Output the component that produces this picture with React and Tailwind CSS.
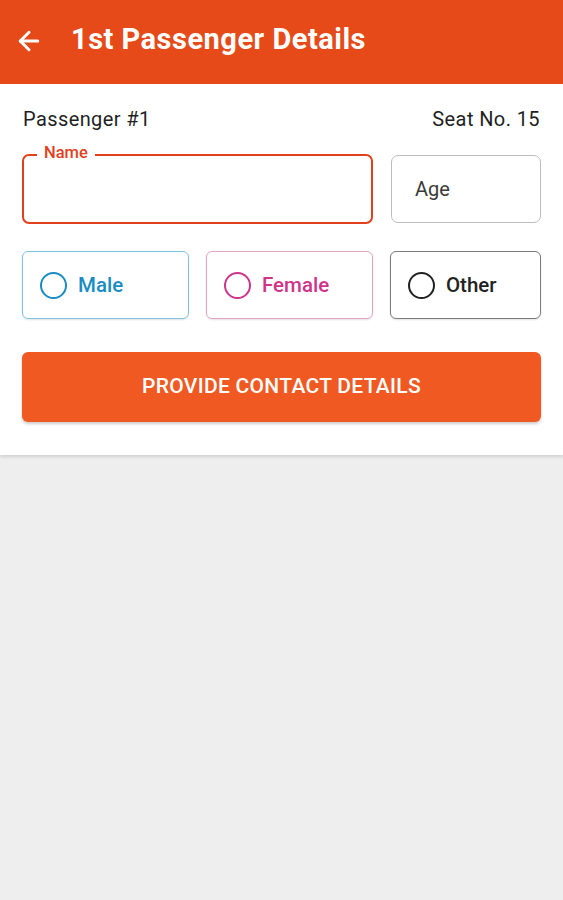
import React, { useState } from "react";
import { ArrowLeft } from "lucide-react";

const genders = [
    { key: "male", label: "Male", box: "border-[#7cc3dd]", text: "text-[#1a8cc4]", ring: "border-[#1a8cc4]" },
    { key: "female", label: "Female", box: "border-[#e3a3c3]", text: "text-[#d0338a]", ring: "border-[#d0338a]" },
    { key: "other", label: "Other", box: "border-[#7a7a7a]", text: "text-[#222222]", ring: "border-[#222222]" },
];

const App = () => {
    const [name, setName] = useState("");
    const [age, setAge] = useState("");
    const [gender, setGender] = useState("");

    return (
        <div className="min-h-screen bg-[#eeeeee] font-['Roboto','Liberation_Sans',sans-serif]">
            {/* toolbar */}
            <div className="h-[84px] bg-[#e64a19] flex items-center pl-[14px]">
                <ArrowLeft size={30} strokeWidth={2.4} className="text-white -mt-[2px]" />
                <h1 className="ml-[27px] -mt-[4px] text-[29px] font-bold text-white tracking-[0.5px]">1st Passenger Details</h1>
            </div>

            {/* card */}
            <div className="bg-white px-[22px] pt-[24px] pb-[33px] shadow-[0_2px_3px_rgba(0,0,0,0.12)]">
                <div className="flex justify-between items-center text-[20px] leading-[22px] text-[#1f1f1f] tracking-[0.4px] px-[1px]">
                    <span>Passenger #1</span>
                    <span>Seat No. 15</span>
                </div>

                <div className="flex gap-[18px] mt-[24px]">
                    <label className="relative flex-1 h-[70px] rounded-[7px] border-2 border-[#e2401c]">
                        <span className="absolute -top-[13px] left-[13px] bg-white px-[7px] text-[16.5px] leading-[20px] font-medium text-[#e2401c]">
                            Name
                        </span>
                        <input
                            value={name}
                            onChange={(e) => setName(e.target.value)}
                            className="w-full h-full bg-transparent outline-none px-[16px] text-[19px]"
                        />
                    </label>
                    <div className="w-[150px] h-[68px] mt-[1px] rounded-[7px] border border-[#bdbdbd] flex items-center">
                        <input
                            value={age}
                            onChange={(e) => setAge(e.target.value)}
                            placeholder="Age"
                            className="w-full h-full bg-transparent outline-none px-[23px] text-[20px] placeholder:text-[#3a3a3a]"
                        />
                    </div>
                </div>

                <div className="flex gap-[17px] mt-[27px]">
                    {genders.map((g) => (
                        <button
                            key={g.key}
                            type="button"
                            onClick={() => setGender(g.key)}
                            className={`${g.key === "other" ? "w-[151px]" : "flex-1"} h-[68px] rounded-[6px] border ${g.box} flex items-center pl-[17px] gap-[11px] shadow-[0_1px_2px_rgba(0,0,0,0.12)]`}
                        >
                            <span className={`w-[27px] h-[27px] rounded-full border-2 ${g.ring} flex items-center justify-center`}>
                                {gender === g.key && <span className={`w-[13px] h-[13px] rounded-full bg-current ${g.text}`} />}
                            </span>
                            <span className={`text-[20.5px] font-medium ${g.text}`}>{g.label}</span>
                        </button>
                    ))}
                </div>

                <button
                    type="button"
                    className="mt-[33px] w-full h-[70px] rounded-[6px] bg-[#f05a22] text-white text-[21px] font-medium tracking-[0.3px] shadow-[0_2px_3px_rgba(0,0,0,0.2)]"
                >
                    PROVIDE CONTACT DETAILS
                </button>
            </div>
        </div>
    );
};

export default App;
